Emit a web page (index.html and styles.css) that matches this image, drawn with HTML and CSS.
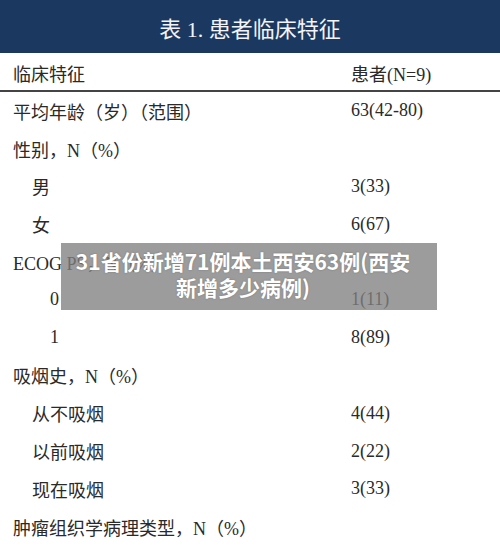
FILE: index.html
```html
<!DOCTYPE html>
<html lang="zh">
<head>
<meta charset="utf-8">
<link rel="stylesheet" href="styles.css">
</head>
<body>
<div class="page">
  <div class="title-bar">表 1. 患者临床特征</div>
  <div class="head-row">
    <span class="label">临床特征</span>
    <span class="value">患者(N=9)</span>
  </div>
  <div class="rows">
    <div class="row"><span class="label">平均年龄（岁）（范围）</span><span class="value">63(42-80)</span></div>
    <div class="row"><span class="label">性别，N（%）</span><span class="value"></span></div>
    <div class="row"><span class="label ind1">男</span><span class="value">3(33)</span></div>
    <div class="row"><span class="label ind1">女</span><span class="value">6(67)</span></div>
    <div class="row"><span class="label">ECOG PS，N（%）</span><span class="value"></span></div>
    <div class="row"><span class="label ind2">0</span><span class="value">1(11)</span></div>
    <div class="row"><span class="label ind2">1</span><span class="value">8(89)</span></div>
    <div class="row"><span class="label">吸烟史，N（%）</span><span class="value"></span></div>
    <div class="row"><span class="label ind1">从不吸烟</span><span class="value">4(44)</span></div>
    <div class="row"><span class="label ind1">以前吸烟</span><span class="value">2(22)</span></div>
    <div class="row"><span class="label ind1">现在吸烟</span><span class="value">3(33)</span></div>
    <div class="row"><span class="label">肿瘤组织学病理类型，N（%）</span><span class="value"></span></div>
  </div>
  <div class="overlay">31省份新增71例本土西安63例(西安<br>新增多少病例)</div>
</div>
</body>
</html>
```

FILE: styles.css
```css
html, body {
  margin: 0;
  padding: 0;
  background: #ffffff;
}
.page {
  position: relative;
  width: 500px;
  height: 553px;
  overflow: hidden;
  font-family: "Liberation Serif", "Noto Sans CJK SC", serif;
  color: #2a2a2a;
}
.title-bar {
  height: 53px;
  background: #1b3860;
  color: #f2f4f7;
  font-family: "Liberation Serif", "Noto Sans CJK SC", serif;
  font-size: 22px;
  display: flex;
  align-items: center;
  justify-content: center;
}
.head-row {
  height: 39px;
  display: flex;
  align-items: center;
  border-bottom: 2px solid #444;
  font-size: 18px;
  padding-top: 2px;
  box-sizing: border-box;
}
.label {
  width: 338px;
  padding-left: 13px;
  box-sizing: border-box;
  white-space: nowrap;
}
.label.ind1 { padding-left: 32px; }
.label.ind2 { padding-left: 50px; }
.value {
  padding-left: 13px;
  white-space: nowrap;
}
.rows {
  display: flex;
  flex-direction: column;
}
.row {
  height: 37.8px;
  display: flex;
  align-items: center;
  font-size: 18px;
}
.overlay {
  position: absolute;
  left: 61px;
  top: 243px;
  width: 376px;
  height: 67px;
  background: rgba(128, 128, 128, 0.78);
  color: #ffffff;
  font-family: "Noto Sans CJK SC", sans-serif;
  font-weight: 700;
  font-size: 21px;
  line-height: 26px;
  text-align: center;
  padding-top: 5px;
  padding-right: 12px;
  box-sizing: border-box;
  text-shadow: 0 0 2px rgba(0,0,0,0.25);
}
```
